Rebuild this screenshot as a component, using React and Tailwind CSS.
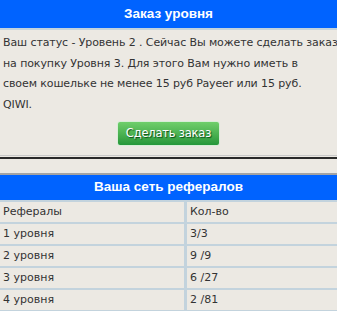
export default function App(){
  const rows=[
    ["Рефералы","Кол-во"],
    ["1 уровня","3/3"],
    ["2 уровня","9 /9"],
    ["3 уровня","6 /27"],
    ["4 уровня","2 /81"],
  ];

  return(
<div className="w-[337px] h-[311px] overflow-hidden bg-[#ece9e3] font-['DejaVu_Sans',sans-serif]">

  {/* order header */}
  <div className="h-[28px] bg-[#0063ff] text-white font-bold text-[13.5px] font-['Liberation_Sans',sans-serif] flex items-center justify-center">
    Заказ уровня
  </div>
  <div className="h-[2px] bg-[#c3d3dd]" />

  <div className="h-[125px] pt-[3px] px-[3px] text-[11px] leading-[20.5px] text-[#333] tracking-[-0.1px] whitespace-nowrap">
    Ваш статус - Уровень 2 . Сейчас Вы можете сделать заказ<br/>
    на покупку Уровня 3. Для этого Вам нужно иметь в<br/>
    своем кошельке не менее 15 руб Payeer или 15 руб.<br/>
    QIWI.
    <div className="flex justify-center mt-[6px]">
      <button className="w-[103px] h-[25px] rounded-[3px] border border-[#d8eed8] bg-gradient-to-b from-[#6fcf6b] to-[#24973a] text-white text-[11.5px] tracking-[-0.2px] [text-shadow:1px_1px_1px_#0b4a18]">
        Сделать заказ
      </button>
    </div>
  </div>

  {/* separator */}
  <div className="h-px bg-[#c9c9c9]" />
  <div className="h-px" />
  <div className="h-[2px] bg-[#2a2a2a]" />
  <div className="h-[14px]" />
  <div className="h-[2px] bg-[#a3a3a3]" />

  {/* referrals header */}
  <div className="h-[25px] bg-[#0063ff] text-white font-bold text-[13.5px] font-['Liberation_Sans',sans-serif] flex items-center justify-center">
    Ваша сеть рефералов
  </div>

  <div className="border-t-2 border-[#c3d3dd]">
    {rows.map((r,i)=>(
      <div key={i} className="flex h-[22px] border-b-2 border-[#c3d3dd] text-[11px] text-[#333]">
        <div className="w-[187px] pl-[3px] flex items-center border-r-[3px] border-[#c3d3dd]">{r[0]}</div>
        <div className="flex-1 pl-[3px] flex items-center">{r[1]}</div>
      </div>
    ))}
  </div>

</div>
  );
}
